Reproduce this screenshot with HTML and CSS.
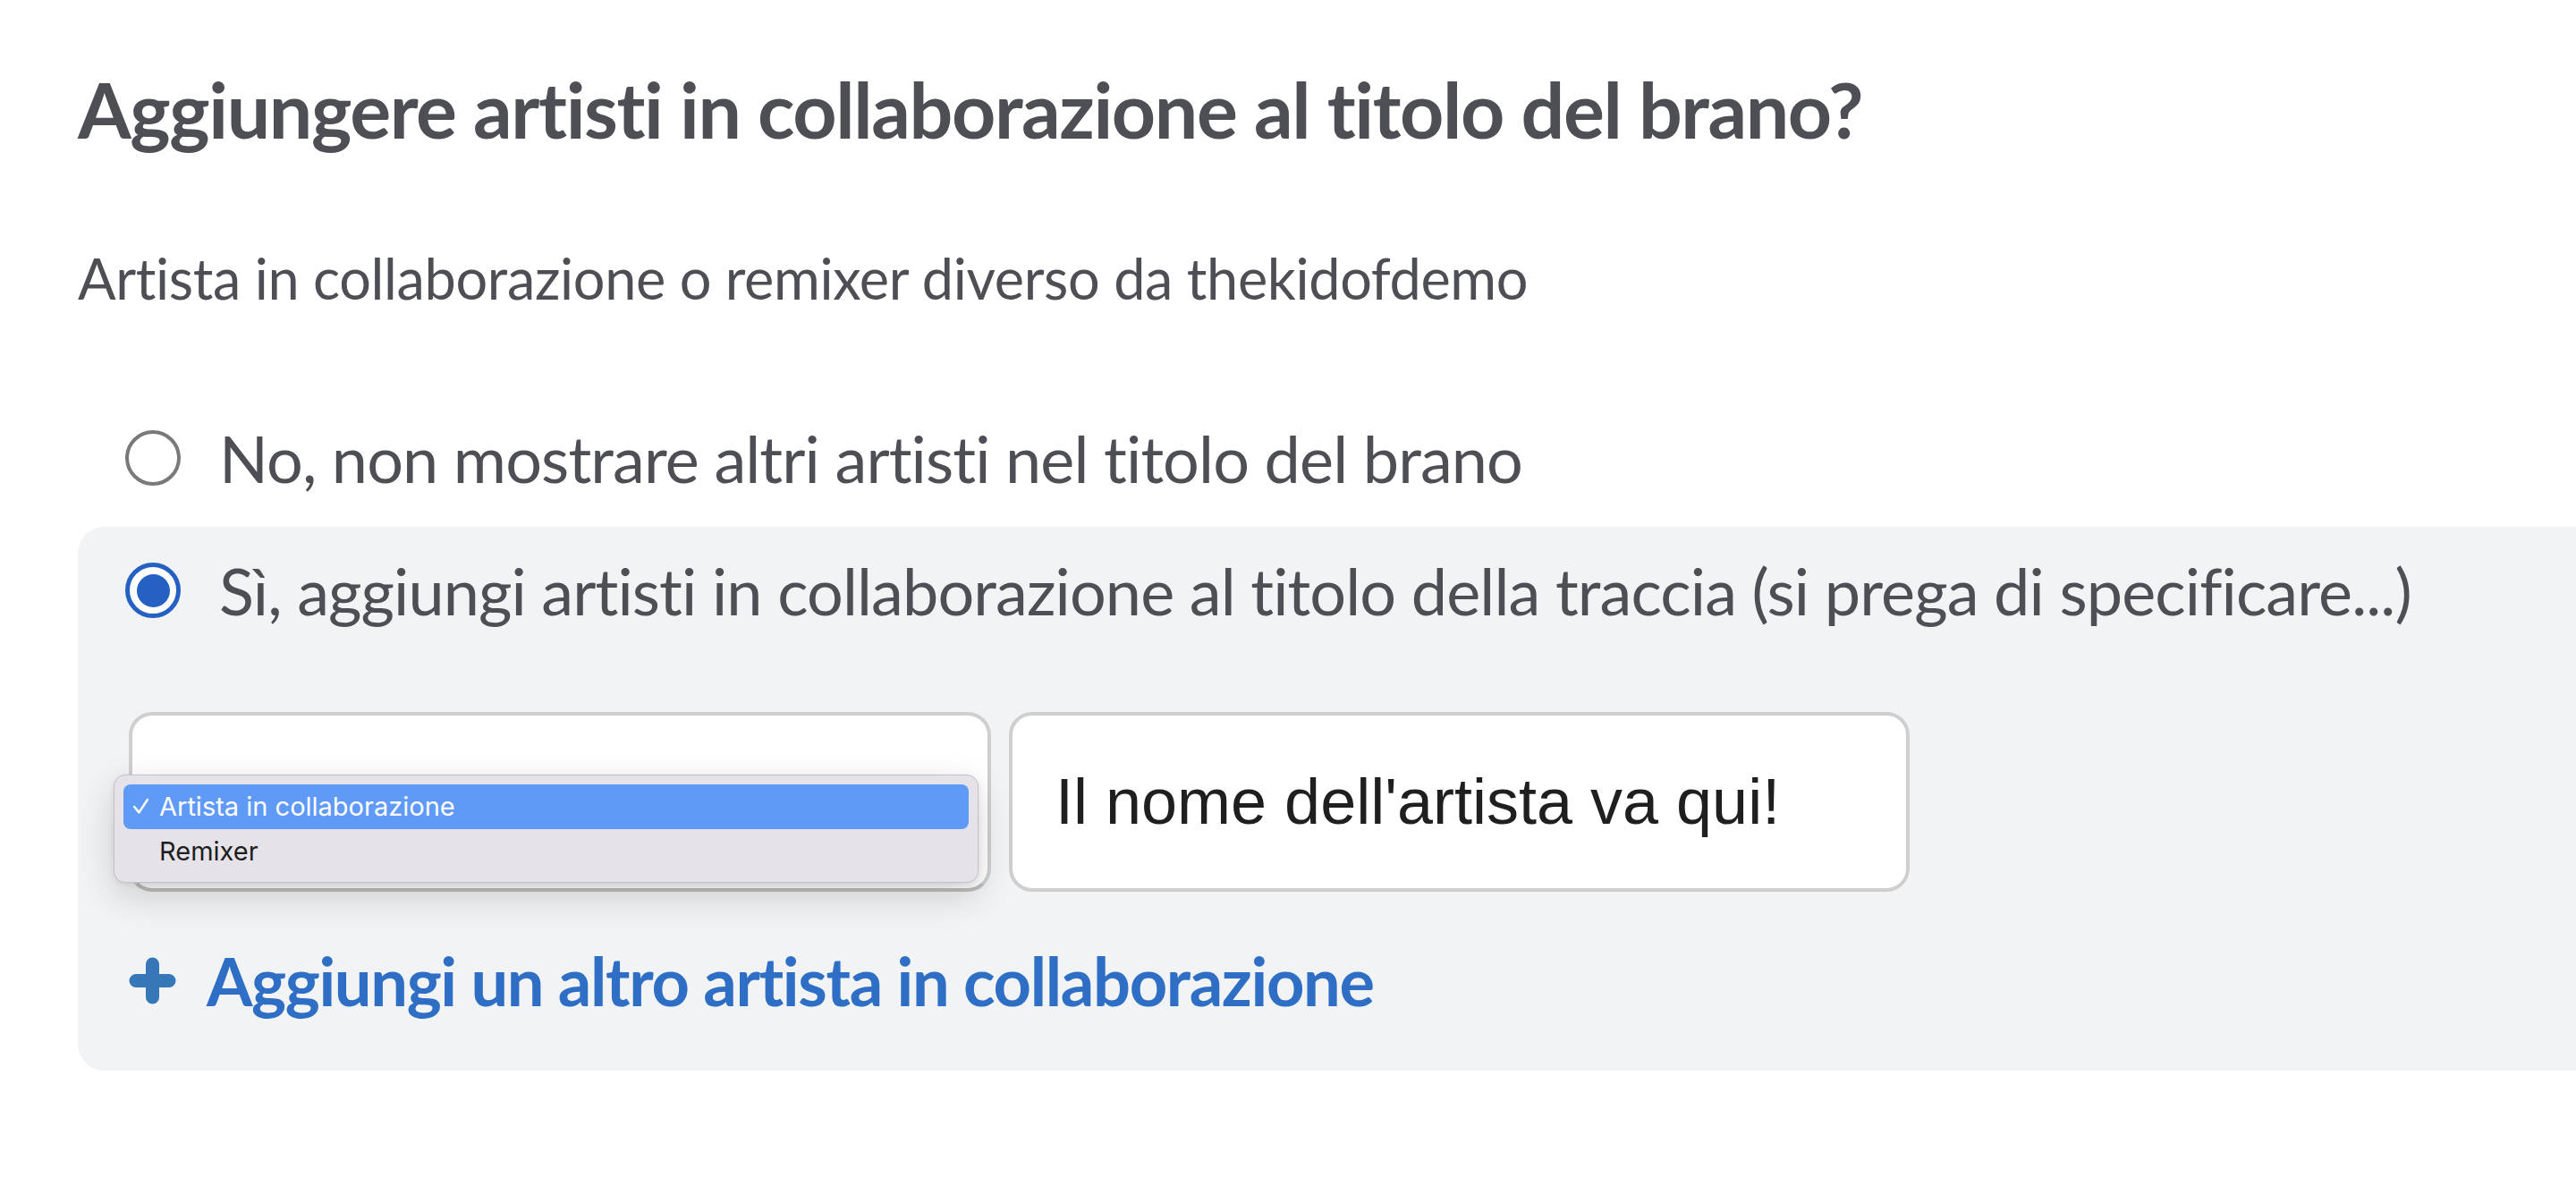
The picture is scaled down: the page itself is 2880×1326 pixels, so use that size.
FILE: index.html
```html
<!DOCTYPE html>
<html lang="it">
<head>
<meta charset="utf-8">
<title>Artisti in collaborazione</title>
<link rel="stylesheet" href="styles.css">
</head>
<body>
<main class="page">
  <h1 class="title">Aggiungere artisti in collaborazione al titolo del brano?</h1>
  <p class="subtitle">Artista in collaborazione o remixer diverso da thekidofdemo</p>

  <div class="option">
    <span class="radio"></span>
    <span class="option-label">No, non mostrare altri artisti nel titolo del brano</span>
  </div>

  <section class="panel">
    <div class="option option-selected">
      <span class="radio radio-checked"></span>
      <span class="option-label">Sì, aggiungi artisti in collaborazione al titolo della traccia (si prega di speci<span class="lig">fi</span>care...)</span>
    </div>

    <div class="fields">
      <div class="select-wrap">
        <div class="select"></div>
        <div class="menu">
          <div class="menu-item menu-item-active">
            <svg class="check" viewBox="0 0 20 20" width="20" height="20"><polyline points="3,10.5 8,16.5 17,3" fill="none" stroke="#ffffff" stroke-width="2.4" stroke-linecap="round" stroke-linejoin="round"/></svg>
            <span>Artista in collaborazione</span>
          </div>
          <div class="menu-item">
            <span class="check-space"></span>
            <span>Remixer</span>
          </div>
        </div>
      </div>
      <div class="text-input">Il nome dell'artista va qui!</div>
    </div>

    <div class="add-link">
      <svg class="plus" viewBox="0 0 53 53" width="53" height="53"><path d="M26.5 8 V45 M8 26.5 H45" stroke="#3577b7" stroke-width="15" stroke-linecap="round" fill="none"/></svg>
      <span>Aggiungi un altro artista in collaborazione</span>
    </div>
  </section>
</main>
</body>
</html>
```

FILE: styles.css
```css
html, body {
  margin: 0;
  padding: 0;
  background: #ffffff;
  overflow-x: hidden;
}

.page {
  padding-left: 87px;
  font-family: Lato, "Open Sans", sans-serif;
  color: #4e4f55;
  font-variant-ligatures: no-common-ligatures;
}

.lig {
  font-variant-ligatures: common-ligatures;
}

.title {
  margin: 70px 0 0 0;
  font-size: 86px;
  font-weight: 700;
  line-height: 1.2;
  letter-spacing: -1.4px;
}

.subtitle {
  margin: 100px 0 0 0;
  font-size: 63px;
  font-weight: 400;
  line-height: 1.2;
  letter-spacing: -0.35px;
}

.option {
  display: flex;
  align-items: center;
  gap: 43px;
  padding-left: 53px;
  margin-top: 120px;
}

.option-label {
  font-size: 72px;
  line-height: 1.2;
  letter-spacing: -0.9px;
}

.radio {
  flex: 0 0 auto;
  width: 62px;
  height: 62px;
  box-sizing: border-box;
  border: 4px solid #797979;
  border-radius: 50%;
  background: #ffffff;
  display: grid;
  place-items: center;
}

.radio-checked {
  border: 5px solid #2560c3;
}

.radio-checked::after {
  content: "";
  width: 37px;
  height: 37px;
  border-radius: 50%;
  background: #2560c3;
}

.panel {
  margin-top: 34px;
  margin-right: -60px;
  background: #f2f3f5;
  border-radius: 30px;
  padding: 28px 0 56px 0;
}

.panel .option {
  margin-top: 0;
}

.fields {
  display: flex;
  gap: 20px;
  margin: 92px 0 0 57px;
}

.select-wrap {
  position: relative;
  width: 964px;
  height: 201px;
}

.select {
  box-sizing: border-box;
  width: 100%;
  height: 100%;
  background: #ffffff;
  border: 4px solid #cfcfcf;
  border-bottom-color: #bdbdbd;
  border-radius: 26px;
}

.menu {
  position: absolute;
  left: -17px;
  top: 70px;
  width: 967px;
  height: 121px;
  box-sizing: border-box;
  padding: 10px;
  background: #e5e3e9;
  border: 1px solid #c3c1c7;
  border-radius: 13px;
  box-shadow: 0 14px 40px rgba(0, 0, 0, 0.16), 0 2px 6px rgba(0, 0, 0, 0.08);
  font-family: Inter, "Liberation Sans", sans-serif;
  font-size: 29px;
  color: #1e1e1e;
}

.menu-item {
  display: flex;
  align-items: center;
  height: 50px;
  padding-left: 9px;
  border-radius: 8px;
}

.menu-item-active {
  background: #5f9af7;
  color: #ffffff;
}

.check {
  width: 21px;
  height: 21px;
  margin-right: 10px;
}

.check-space {
  width: 31px;
}

.text-input {
  box-sizing: border-box;
  width: 1007px;
  height: 201px;
  background: #ffffff;
  border: 4px solid #cfcfcf;
  border-radius: 26px;
  padding-left: 48px;
  display: flex;
  align-items: center;
  font-family: "Liberation Sans", Arial, sans-serif;
  font-size: 72px;
  color: #1f1f1f;
}

.add-link {
  display: flex;
  align-items: center;
  gap: 34px;
  margin: 56px 0 0 57px;
  font-size: 74px;
  font-weight: 700;
  line-height: 1.2;
  letter-spacing: -1.35px;
  color: #2e6fc5;
}

.plus {
  flex: 0 0 auto;
}
```
